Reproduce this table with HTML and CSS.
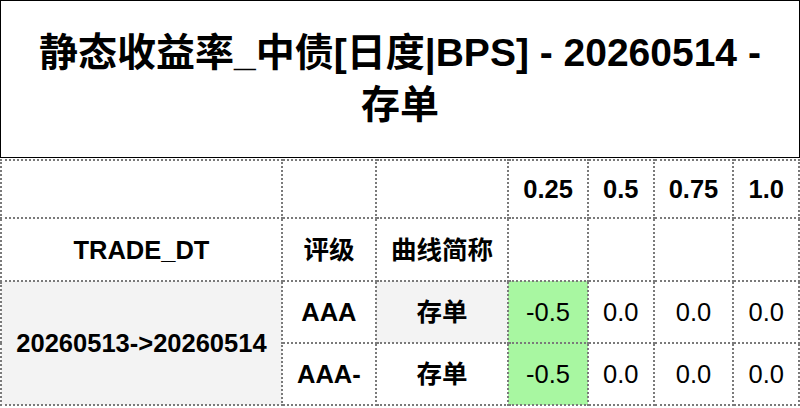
FILE: index.html
```html
<!DOCTYPE html>
<html lang="zh">
<head>
<meta charset="utf-8">
<title>静态收益率</title>
<link rel="stylesheet" href="styles.css">
</head>
<body>
<div class="title">静态收益率_中债[日度|BPS] - 20260514 - 存单</div>
<table class="grid">
  <thead>
    <tr class="row-cols">
      <th></th><th></th><th></th>
      <th>0.25</th><th>0.5</th><th>0.75</th><th>1.0</th>
    </tr>
    <tr class="row-names">
      <th>TRADE_DT</th><th>评级</th><th>曲线简称</th>
      <th></th><th></th><th></th><th></th>
    </tr>
  </thead>
  <tbody>
    <tr class="row-data">
      <th rowspan="2" class="shade">20260513-&gt;20260514</th>
      <th>AAA</th>
      <th class="shade">存单</th>
      <td class="neg">-0.5</td><td>0.0</td><td>0.0</td><td>0.0</td>
    </tr>
    <tr class="row-data">
      <th>AAA-</th>
      <th>存单</th>
      <td class="neg">-0.5</td><td>0.0</td><td>0.0</td><td>0.0</td>
    </tr>
  </tbody>
</table>
</body>
</html>
```
FILE: styles.css
```css
html, body {
  margin: 0;
  padding: 0;
  background: #fff;
}
body {
  width: 800px;
  font-family: "Liberation Sans", "Noto Sans CJK SC", sans-serif;
  color: #000;
}
.title {
  box-sizing: border-box;
  width: 800px;
  height: 158px;
  border: 1px solid #000;
  padding: 0 20px;
  display: flex;
  align-items: center;
  justify-content: center;
  text-align: center;
  font-size: 39px;
  font-weight: bold;
  line-height: 52px;
}
.grid {
  border-collapse: collapse;
  width: 800px;
  margin-top: 1px;
  font-size: 25.5px;
  line-height: 28px;
}
.grid th, .grid td {
  border: 2px dotted #7a7a7a;
  padding: 0 14px;
  text-align: center;
  vertical-align: middle;
  white-space: nowrap;
}
.grid th {
  font-weight: bold;
}
.row-cols th { height: 56px; }
.row-names th { height: 61px; }
.row-data th, .row-data td { height: 60px; }
.shade { background: #f3f3f3; }
.neg { background: #a8f7a1; }
```
